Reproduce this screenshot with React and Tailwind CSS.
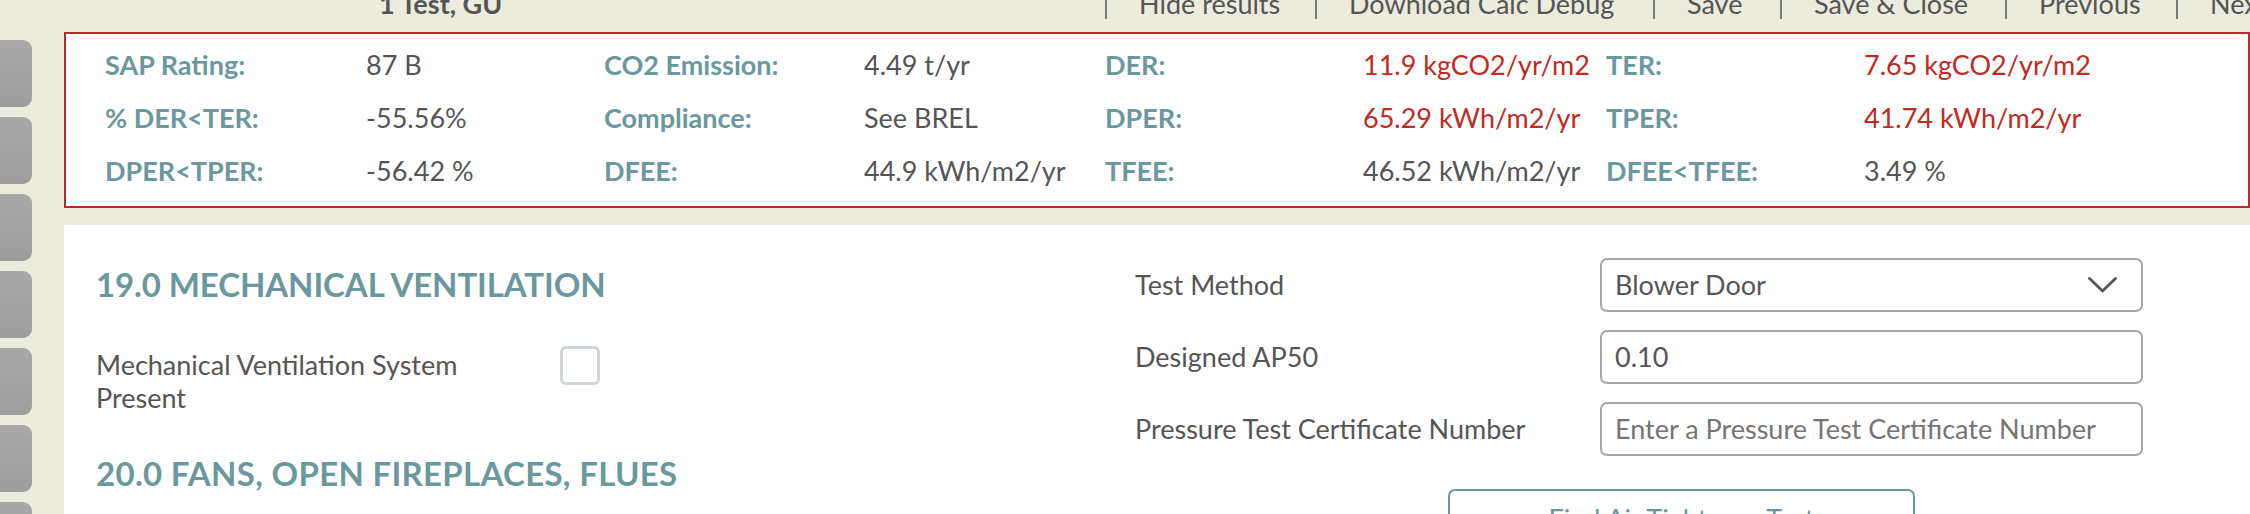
import React from 'react';

const stats = [
  [
    ['SAP Rating:', '87 B'],
    ['CO2 Emission:', '4.49 t/yr'],
    ['DER:', '11.9 kgCO2/yr/m2', true],
    ['TER:', '7.65 kgCO2/yr/m2', true],
  ],
  [
    ['% DER<TER:', '-55.56%'],
    ['Compliance:', 'See BREL'],
    ['DPER:', '65.29 kWh/m2/yr', true],
    ['TPER:', '41.74 kWh/m2/yr', true],
  ],
  [
    ['DPER<TPER:', '-56.42 %'],
    ['DFEE:', '44.9 kWh/m2/yr'],
    ['TFEE:', '46.52 kWh/m2/yr'],
    ['DFEE<TFEE:', '3.49 %'],
  ],
];

// widths measured between the separators
const navItems = [
  ['Hide results', 'w-[210px]'],
  ['Download Calc Debug', 'w-[338px]'],
  ['Save', 'w-[127px]'],
  ['Save & Close', 'w-[225px]'],
  ['Previous', 'w-[171px]'],
  ['Next', 'w-[120px]'],
];

const Sidebar = () => (
  <div className="w-[32px] shrink-0 flex flex-col gap-[10px] pt-[40px]">
    {Array.from({ length: 7 }).map((_, i) => (
      <div
        key={i}
        className="h-[67px] w-[32px] shrink-0 rounded-r-[9px] bg-gradient-to-b from-[#a9a9a9] to-[#9d9d9d]"
      />
    ))}
  </div>
);

const Header = () => (
  <div className="h-[32px] shrink-0 flex items-start text-[27px] leading-[32px] text-[#555555]">
    <div className="w-[1041px] shrink-0 pl-[315px]">
      <span className="block -mt-[12px] font-bold">1 Test, GU</span>
    </div>
    {navItems.map(([item, w]) => (
      <div key={item} className={`flex items-start shrink-0 ${w}`}>
        <span className="w-[2px] h-[19px] shrink-0 bg-[#7a7a7a]" />
        <span className="block -mt-[12px] pl-[32px] whitespace-nowrap">{item}</span>
      </div>
    ))}
  </div>
);

const StatsBox = () => (
  <div className="h-[176px] shrink-0 border-2 border-[#c0282a] bg-white pt-[5px] pl-[39px] text-[27px]">
    {stats.map((row, r) => (
      <div
        key={r}
        className="h-[53px] grid grid-cols-[261px_238px_260px_241px_258px_243px_258px_auto] items-center whitespace-nowrap"
      >
        {row.map(([label, value, red]) => (
          <React.Fragment key={label}>
            <span className="font-bold text-[#6b979e]">{label}</span>
            <span className={red ? 'text-[#bf2a23]' : 'text-[#555555]'}>{value}</span>
          </React.Fragment>
        ))}
      </div>
    ))}
  </div>
);

const Field = ({ label, children }) => (
  <div className="flex items-center h-[54px] shrink-0">
    <span className="w-[465px] shrink-0 text-[#555555]">{label}</span>
    {children}
  </div>
);

const FormPanel = () => (
  <div className="flex-1 min-h-0 overflow-hidden bg-white flex text-[27px]">
    {/* Left column */}
    <div className="w-[1071px] shrink-0 pl-[32px] pt-[41px]">
      <h2 className="text-[33px] leading-[36px] tracking-[-0.1px] font-bold text-[#6b979e]">19.0 MECHANICAL VENTILATION</h2>
      <div className="flex items-start mt-[46px]">
        <span className="w-[464px] shrink-0 leading-[33px] text-[#555555]">
          Mechanical Ventilation System
          <br />
          Present
        </span>
        <span className="w-[40px] h-[39px] -mt-[2px] rounded-[6px] border-[3px] border-[#d0d5d9] bg-white" />
      </div>
      <h2 className="mt-[41px] text-[33px] leading-[36px] tracking-[0.3px] font-bold text-[#6b979e]">20.0 FANS, OPEN FIREPLACES, FLUES</h2>
    </div>

    {/* Right column */}
    <div className="flex-1 pt-[33px] flex flex-col gap-[18px]">
      <Field label="Test Method">
        <div className="w-[543px] h-[54px] rounded-[7px] border-2 border-[#a6a6a6] flex items-center justify-between pl-[13px] pr-[24px] text-[#555555]">
          <span>Blower Door</span>
          <svg width="29" height="16" viewBox="0 0 29 16" fill="none">
            <path d="M1.5 1.5 L14.5 14 L27.5 1.5" stroke="#555555" strokeWidth="2.8" strokeLinecap="round" strokeLinejoin="round" />
          </svg>
        </div>
      </Field>
      <Field label="Designed AP50">
        <div className="w-[543px] h-[54px] rounded-[7px] border-2 border-[#a6a6a6] flex items-center pl-[13px] text-[#555555]">
          0.10
        </div>
      </Field>
      <Field label="Pressure Test Certificate Number">
        <div className="w-[543px] h-[54px] rounded-[7px] border-2 border-[#a6a6a6] flex items-center pl-[13px] text-[#757575] whitespace-nowrap">
          Enter a Pressure Test Certificate Number
        </div>
      </Field>
      <div className="pl-[313px] pt-[15px] shrink-0">
        <div className="w-[467px] h-[60px] rounded-[7px] border-2 border-[#6b979e] flex items-center justify-center text-[#6b979e]">
          Find Air Tightness Test
        </div>
      </div>
    </div>
  </div>
);

export default function App() {
  return (
    <div className="w-[2250px] h-[514px] overflow-hidden bg-[#ebebde] flex font-['Lato',sans-serif]">
      <Sidebar />
      <div className="flex-1 min-w-0 ml-[32px] flex flex-col">
        <Header />
        <StatsBox />
        <div className="h-[17px] shrink-0" />
        <FormPanel />
      </div>
    </div>
  );
}
